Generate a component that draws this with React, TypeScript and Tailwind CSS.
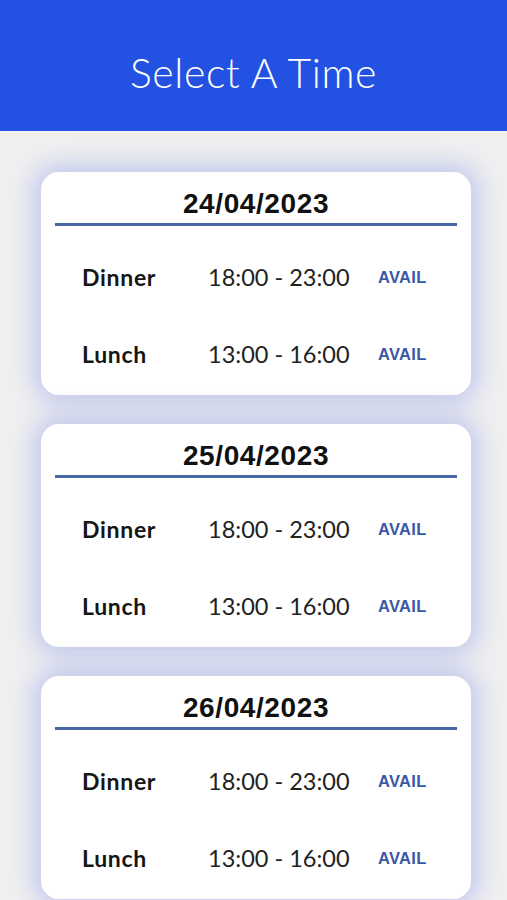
import React from 'react';

const days = ['24/04/2023', '25/04/2023', '26/04/2023'];

const slots = [
  { name: 'Dinner', time: '18:00 - 23:00' },
  { name: 'Lunch', time: '13:00 - 16:00' },
];

function DayCard({ date }: { date: string }) {
  return (
    <div className="h-[223px] shrink-0 rounded-[18px] bg-white shadow-[0_0_24px_8px_rgba(110,130,225,0.35)]">
      <div className="mx-[14px] border-b-[3px] border-[#4a67a6] pt-[17px] pb-[4px] text-center font-['Liberation_Sans',Arial,sans-serif] text-[28px] font-bold tracking-[0.6px] leading-[30px] text-[#111]">
        {date}
      </div>
      <div className="flex flex-col pt-[34px] gap-[47px]">
        {slots.map((s) => (
          <div key={s.name} className="grid grid-cols-[126px_170px_auto] items-center pl-[41px] h-[30px]">
            <span className="font-['Lato',sans-serif] text-[23px] font-bold tracking-[0.7px] text-[#151515]">{s.name}</span>
            <span className="font-['Lato',sans-serif] text-[23.5px] font-normal text-[#222]">{s.time}</span>
            <span className="font-['Liberation_Sans',Arial,sans-serif] text-[16.5px] font-bold tracking-[0.3px] text-[#3a58a6]">AVAIL</span>
          </div>
        ))}
      </div>
    </div>
  );
}

export default function App() {
  return (
    <div className="w-[507px] h-[900px] overflow-hidden bg-[#f0f0f1]">
      <header className="h-[131px] bg-[#2352e3] flex items-center justify-center pt-[14px]">
        <h1 className="font-['Lato',sans-serif] text-[41px] font-light tracking-[0.6px] text-white">Select A Time</h1>
      </header>
      <div className="flex flex-col gap-[29px] pl-[41px] pr-[36px] pt-[41px]">
        {days.map((d) => (
          <DayCard key={d} date={d} />
        ))}
      </div>
    </div>
  );
}
